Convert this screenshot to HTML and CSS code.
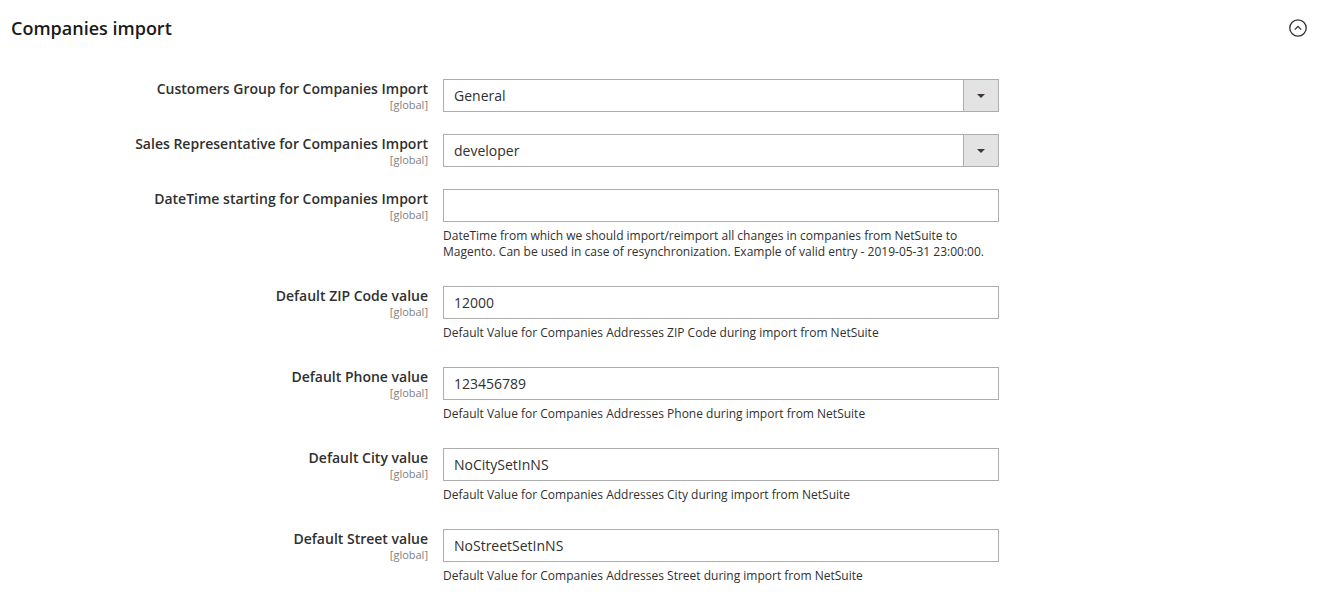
FILE: index.html
```html
<!DOCTYPE html>
<html lang="en">
<head>
  <meta charset="UTF-8">
  <title>Companies import</title>
  <link rel="stylesheet" href="styles.css">
</head>
<body>
<div id="section">
  <div class="section-head">
    <h2>Companies import</h2>
    <span class="toggle">
      <svg width="20" height="20" viewBox="0 0 20 20">
        <circle cx="10" cy="10" r="8.2" fill="none" stroke="#303030" stroke-width="1.3"/>
        <path d="M6.8 11.6 L10 8.4 L13.2 11.6" fill="none" stroke="#303030" stroke-width="1.3"/>
      </svg>
    </span>
  </div>

  <div class="fields">
    <div class="row">
      <div class="label"><span>Customers Group for Companies Import</span><small>[global]</small></div>
      <div class="control">
        <div class="select">General<span class="arrow"></span></div>
      </div>
    </div>

    <div class="row">
      <div class="label"><span>Sales Representative for Companies Import</span><small>[global]</small></div>
      <div class="control">
        <div class="select">developer<span class="arrow"></span></div>
      </div>
    </div>

    <div class="row">
      <div class="label"><span>DateTime starting for Companies Import</span><small>[global]</small></div>
      <div class="control">
        <input type="text" value="">
        <p class="note">DateTime from which we should import/reimport all changes in companies from NetSuite to Magento. Can be used in case of resynchronization. Example of valid entry - 2019-05-31 23:00:00.</p>
      </div>
    </div>

    <div class="row">
      <div class="label"><span>Default ZIP Code value</span><small>[global]</small></div>
      <div class="control">
        <input type="text" value="12000">
        <p class="note">Default Value for Companies Addresses ZIP Code during import from NetSuite</p>
      </div>
    </div>

    <div class="row">
      <div class="label"><span>Default Phone value</span><small>[global]</small></div>
      <div class="control">
        <input type="text" value="123456789">
        <p class="note">Default Value for Companies Addresses Phone during import from NetSuite</p>
      </div>
    </div>

    <div class="row">
      <div class="label"><span>Default City value</span><small>[global]</small></div>
      <div class="control">
        <input type="text" value="NoCitySetInNS">
        <p class="note">Default Value for Companies Addresses City during import from NetSuite</p>
      </div>
    </div>

    <div class="row">
      <div class="label"><span>Default Street value</span><small>[global]</small></div>
      <div class="control">
        <input type="text" value="NoStreetSetInNS">
        <p class="note">Default Value for Companies Addresses Street during import from NetSuite</p>
      </div>
    </div>
  </div>
</div>
</body>
</html>
```
FILE: styles.css
```css
body {
    font-family: "Open Sans", Arial, sans-serif;
    margin: 0;
    padding: 0;
    background-color: #fff;
    color: #303030;
}

#section {
    padding: 0 0 0 11px;
}

.section-head {
    display: flex;
    justify-content: space-between;
    align-items: center;
    height: 55px;
}

.section-head h2 {
    margin: 0;
    font-size: 18px;
    font-weight: 600;
    color: #1a1a1a;
}

.toggle {
    display: flex;
    margin-right: 15px;
}

.fields {
    padding-top: 24px;
}

.row {
    display: grid;
    grid-template-columns: 417px 556px;
    column-gap: 15px;
    padding-bottom: 22px;
}

.label {
    text-align: right;
    display: flex;
    flex-direction: column;
    align-items: flex-end;
}

.label span {
    font-size: 14px;
    font-weight: 600;
    line-height: 19px;
    color: #303030;
}

.label small {
    font-size: 11px;
    line-height: 13px;
    color: #808080;
}

.control input,
.select {
    display: block;
    width: 100%;
    height: 33px;
    padding: 0 10px;
    border: 1px solid #adadad;
    box-sizing: border-box;
    font-family: "Open Sans", Arial, sans-serif;
    font-size: 14px;
    color: #303030;
    background: #fff;
    margin: 0;
}

.select {
    position: relative;
    line-height: 31px;
}

.arrow {
    position: absolute;
    top: 0;
    right: 0;
    width: 34px;
    height: 31px;
    background: #e3e3e3;
    border-left: 1px solid #adadad;
}

.arrow::after {
    content: "";
    position: absolute;
    left: 13px;
    top: 14px;
    border-left: 4px solid transparent;
    border-right: 4px solid transparent;
    border-top: 4px solid #41362f;
}

.note {
    margin: 6px 0 4px;
    font-size: 12px;
    line-height: 16px;
    color: #303030;
}
```
